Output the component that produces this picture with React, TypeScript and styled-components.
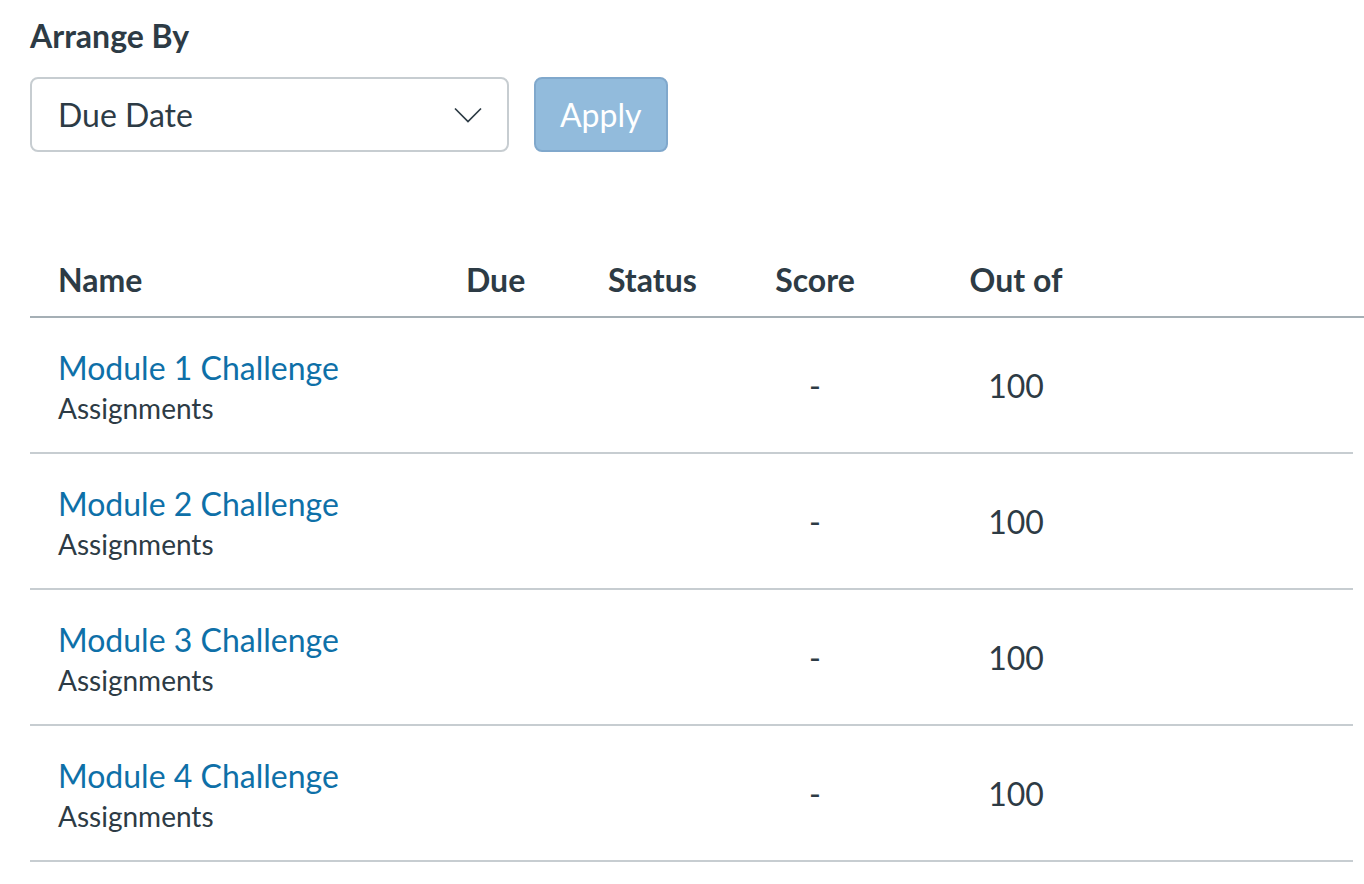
import React from 'react';
import styled, {createGlobalStyle} from 'styled-components';

const GlobalStyle = createGlobalStyle`
  html, body {
    margin: 0;
    padding: 0;
    background: #fff;
    font-family: Lato, "Open Sans", "Liberation Sans", sans-serif;
    color: #2d3b45;
  }
`;

const Page = styled.div`
  padding: 16px 0 0 30px;
  width: 1334px;
`;

const Label = styled.div`
  font-size: 32px;
  font-weight: 700;
  line-height: 40px;
  margin-bottom: 21px;
`;

const Controls = styled.div`
  display: flex;
  align-items: center;
  gap: 25px;
`;

const Select = styled.div`
  box-sizing: border-box;
  width: 479px;
  height: 75px;
  border: 2px solid #c7cdd1;
  border-radius: 8px;
  display: flex;
  align-items: center;
  justify-content: space-between;
  padding: 0 24px 0 26px;
  font-size: 32px;
`;

const ApplyButton = styled.button`
  box-sizing: border-box;
  height: 75px;
  padding: 0 24px;
  border: 2px solid #80a8cc;
  border-radius: 8px;
  background: #92bbdc;
  color: #fff;
  font-family: inherit;
  font-size: 32px;
`;

const Table = styled.div`
  margin-top: 90px;
`;

const Grid = styled.div`
  display: grid;
  grid-template-columns: 436px 142px 137px 140px 262px 1fr;
  align-items: center;
`;

const HeadRow = styled(Grid)`
  height: 74px;
  border-bottom: 2px solid #a5afb5;
  font-weight: 700;
  font-size: 32px;
`;

const BodyRow = styled(Grid)`
  height: 134px;
  border-bottom: 2px solid #c7cdd1;
  margin-right: 11px;
  font-size: 32px;
`;

const Cell = styled.div<{center?: boolean; first?: boolean}>`
  text-align: ${({center}) => (center ? 'center' : 'left')};
  padding-left: ${({first}) => (first ? '28px' : '0')};
`;

const NameCell = styled(Cell)`
  padding-top: 6px;
`;

const Title = styled.a`
  display: block;
  color: #0e70a8;
  text-decoration: none;
  font-size: 32px;
  line-height: 40px;
`;

const Sub = styled.div`
  font-size: 28px;
  line-height: 40px;
`;

const Chevron = () => (
  <svg width="30" height="16" viewBox="0 0 30 16" fill="none">
    <path d="M2 1.5 L15 14.5 L28 1.5" stroke="#2d3b45" strokeWidth="1.7" />
  </svg>
);

const rows = [1, 2, 3, 4];

export default function App() {
  return (
    <Page>
      <GlobalStyle />
      <Label>Arrange By</Label>
      <Controls>
        <Select>
          <span>Due Date</span>
          <Chevron />
        </Select>
        <ApplyButton>Apply</ApplyButton>
      </Controls>
      <Table>
        <HeadRow>
          <Cell first>Name</Cell>
          <Cell>Due</Cell>
          <Cell>Status</Cell>
          <Cell center>Score</Cell>
          <Cell center>Out of</Cell>
          <Cell />
        </HeadRow>
        {rows.map((n) => (
          <BodyRow key={n}>
            <NameCell first>
              <Title href="#">Module {n} Challenge</Title>
              <Sub>Assignments</Sub>
            </NameCell>
            <Cell />
            <Cell />
            <Cell center>-</Cell>
            <Cell center>100</Cell>
            <Cell />
          </BodyRow>
        ))}
      </Table>
    </Page>
  );
}
